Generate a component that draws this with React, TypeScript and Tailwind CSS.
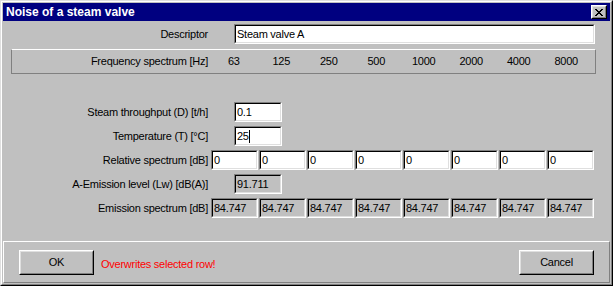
import React from "react";

const freqs = ["63", "125", "250", "500", "1000", "2000", "4000", "8000"];

function Sunken({
  w,
  value,
  readOnly,
  cursor,
}: {
  w: string;
  value: string;
  readOnly?: boolean;
  cursor?: boolean;
}) {
  return (
    <div
      className={`${w} h-[20px] shrink-0 border border-t-[#808080] border-l-[#808080] border-r-white border-b-white`}
    >
      <div
        className={`h-full border border-t-black border-l-black border-r-[#dfdfdf] border-b-[#dfdfdf] ${
          readOnly ? "bg-[#c0c0c0]" : "bg-white"
        } pl-[1px] flex items-center overflow-hidden whitespace-nowrap leading-none`}
      >
        <span>{value}</span>
        {cursor && <span className="inline-block w-px h-[13px] bg-black" />}
      </div>
    </div>
  );
}

function Button({ label }: { label: string }) {
  return (
    <div className="w-[75px] h-[25px] border border-t-white border-l-white border-r-black border-b-black">
      <div className="h-full border border-t-[#dfdfdf] border-l-[#dfdfdf] border-r-[#808080] border-b-[#808080] flex items-center justify-center">
        {label}
      </div>
    </div>
  );
}

function Label({ children }: { children: React.ReactNode }) {
  return (
    <div className="w-[197px] shrink-0 text-right whitespace-nowrap">{children}</div>
  );
}

export default function App() {
  return (
    <div className="w-[613px] h-[286px] bg-[#c0c0c0] border border-t-[#dfdfdf] border-l-[#dfdfdf] border-r-black border-b-black font-['Liberation_Sans',Arial,sans-serif] text-[11px] tracking-[-0.25px] text-black">
      <div className="h-full border border-t-white border-l-white border-r-[#808080] border-b-[#808080] p-px flex flex-col">
        {/* title bar */}
        <div className="h-[18px] shrink-0 bg-[#000080] flex items-center justify-between pl-[3px] pr-[3px]">
          <span className="text-white font-bold text-[12px] tracking-normal leading-none">Noise of a steam valve</span>
          <div className="w-[16px] h-[14px] border border-t-white border-l-white border-r-black border-b-black bg-[#c0c0c0]">
            <div className="w-full h-full border border-t-[#dfdfdf] border-l-[#dfdfdf] border-r-[#808080] border-b-[#808080] flex items-center justify-center">
              <svg width="8" height="7" viewBox="0 0 8 7" shapeRendering="crispEdges">
                <path
                  fill="#000"
                  d="M0 0h2v1H0zM6 0h2v1H6zM1 1h2v1H1zM5 1h2v1H5zM2 2h4v1H2zM3 3h2v1H3zM2 4h4v1H2zM1 5h2v1H1zM5 5h2v1H5zM0 6h2v1H0zM6 6h2v1H6z"
                />
              </svg>
            </div>
          </div>
        </div>

        {/* main area */}
        <div className="h-[220px] shrink-0 flex flex-col pl-[8px]">
          <div className="mt-[3px] flex items-center">
            <Label>Descriptor</Label>
            <div className="ml-[26px]">
              <Sunken w="w-[361px]" value="Steam valve A" />
            </div>
          </div>

          <div className="mt-[5px] w-[585px] h-[25px] border border-t-white border-l-[#808080] border-r-[#808080] border-b-[#808080] flex items-center">
            <div className="w-[196px] shrink-0 text-right whitespace-nowrap">Frequency spectrum [Hz]</div>
            <div className="ml-[2px] flex">
              {freqs.map((f) => (
                <div key={f} className="w-[47.5px] text-center">
                  {f}
                </div>
              ))}
            </div>
          </div>

          <div className="mt-[28px] flex flex-col gap-[4px]">
            <div className="flex items-center">
              <Label>Steam throughput (D) [t/h]</Label>
              <div className="ml-[26px]">
                <Sunken w="w-[48px]" value="0.1" />
              </div>
            </div>
            <div className="flex items-center">
              <Label>Temperature (T) [°C]</Label>
              <div className="ml-[26px]">
                <Sunken w="w-[48px]" value="25" cursor />
              </div>
            </div>
            <div className="flex items-center">
              <Label>Relative spectrum [dB]</Label>
              <div className="ml-[3px] flex gap-[1px]">
                {freqs.map((f) => (
                  <Sunken key={f} w="w-[47px]" value="0" />
                ))}
              </div>
            </div>
            <div className="flex items-center">
              <Label>A-Emission level (Lw) [dB(A)]</Label>
              <div className="ml-[26px]">
                <Sunken w="w-[48px]" value="91.711" readOnly />
              </div>
            </div>
            <div className="flex items-center">
              <Label>Emission spectrum [dB]</Label>
              <div className="ml-[3px] flex gap-[1px]">
                {freqs.map((f) => (
                  <Sunken key={f} w="w-[47px]" value="84.747" readOnly />
                ))}
              </div>
            </div>
          </div>
        </div>

        {/* bottom panel */}
        <div className="flex-1 border border-t-white border-l-white border-r-[#808080] border-b-[#808080] pt-[8px] pl-[15px] pr-[15px] flex items-start">
          <Button label="OK" />
          <span className="ml-[7px] mt-[6px] text-[#ff0000] whitespace-nowrap">Overwrites selected row!</span>
          <div className="ml-auto">
            <Button label="Cancel" />
          </div>
        </div>
      </div>
    </div>
  );
}
